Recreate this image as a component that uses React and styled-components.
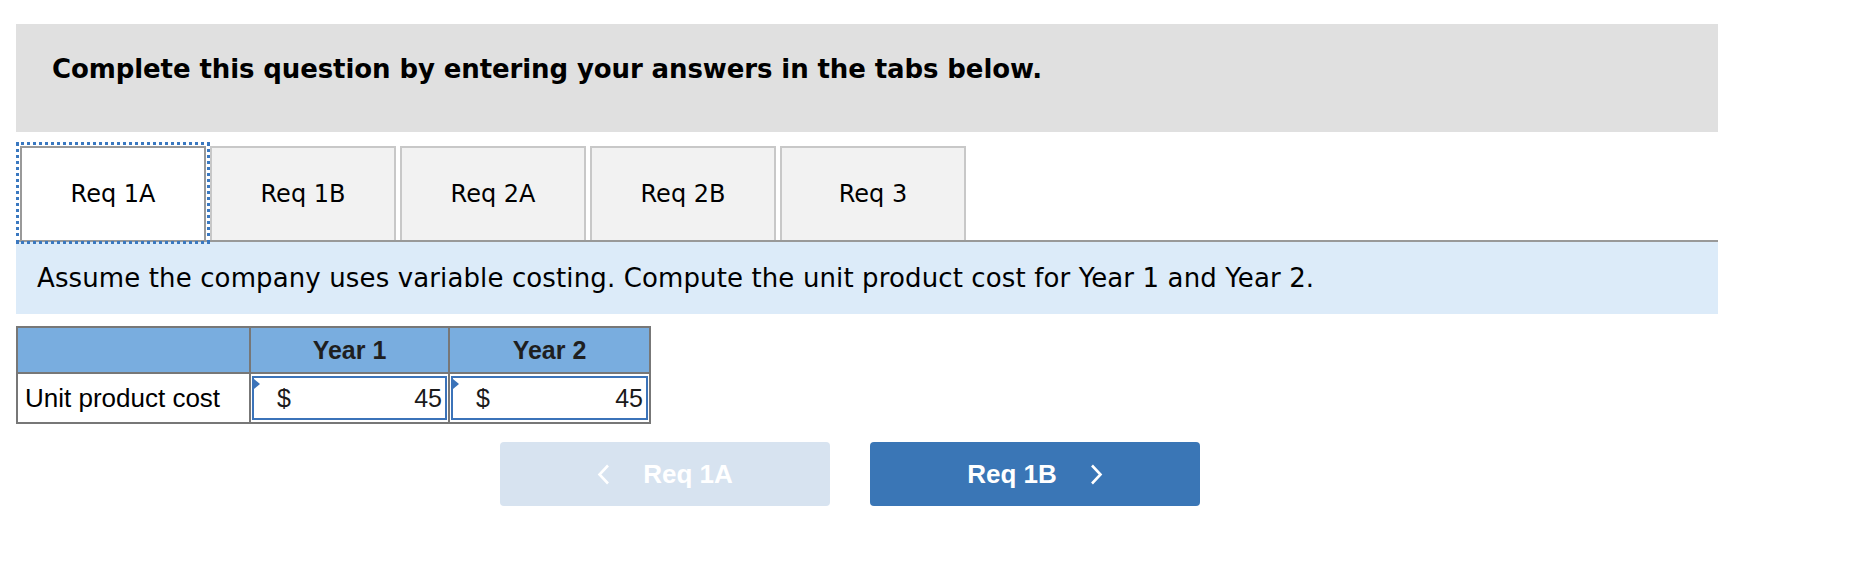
import React from "react";
import styled, {createGlobalStyle} from "styled-components";

const GlobalStyle = createGlobalStyle`
    html, body {
        margin: 0;
        padding: 0;
        background: #FFFFFF;
    }
`;

const PageContainer = styled.div`
    padding: 24px 0 0 16px;
    width: 1702px;
`;

const QuestionHeader = styled.section`
    height: 108px;
    box-sizing: border-box;
    background: #E0E0E0;
    padding: 29px 0 0 36px;
`;

const HeaderTitle = styled.h2`
    margin: 0;
    font-family: "DejaVu Sans", Verdana, sans-serif;
    font-weight: bold;
    font-size: 26px;
    line-height: 32px;
    letter-spacing: -0.1px;
    color: #000000;
`;

const TabBar = styled.div`
    display: flex;
    gap: 4px;
    margin-top: 14px;
    padding-left: 4px;
    border-bottom: 2px solid #999999;
`;

const Tab = styled.button`
    width: 186px;
    height: 94px;
    box-sizing: border-box;
    border: 2px solid ${props => props.active ? "#999999" : "#C8C8C8"};
    border-bottom: none;
    background: ${props => props.active ? "#FFFFFF" : "#F2F2F2"};
    outline: ${props => props.active ? "3px dotted #3A78C0" : "none"};
    outline-offset: 1px;
    font-family: "DejaVu Sans", Verdana, sans-serif;
    font-size: 24px;
    color: #000000;
    padding: 0;
    cursor: pointer;
`;

const Instructions = styled.div`
    height: 72px;
    display: flex;
    align-items: center;
    background: #DCEBF9;
    padding-left: 21px;
    font-family: "DejaVu Sans", Verdana, sans-serif;
    font-size: 26px;
    letter-spacing: 0.12px;
    color: #000000;
`;

const AnswerTable = styled.table`
    margin-top: 12px;
    border-collapse: collapse;
    font-family: "Liberation Sans", Arial, sans-serif;
    font-size: 25px;
    color: #1A1A1A;

    th, td {
        border: 2px solid #777777;
    }
`;

const HeadCell = styled.th`
    width: ${props => props.w}px;
    height: 44px;
    padding: 0;
    background: #79ADDF;
    font-weight: bold;
    text-align: center;
    color: #1F1F1F;
`;

const LabelCell = styled.td`
    height: 46px;
    padding: 0 0 0 7px;
    background: #FFFFFF;
    text-align: left;
    font-size: 26px;
    color: #000000;
`;

const InputCell = styled.td`
    height: 46px;
    padding: 1px;
    background: #FFFFFF;
`;

const InputBox = styled.div`
    position: relative;
    height: 44px;
    box-sizing: border-box;
    border: 2px solid #3B73B9;
    display: flex;
    align-items: center;
    justify-content: space-between;
    padding: 0 3px 0 23px;
    color: #1A1A1A;
`;

const CornerMark = styled.span`
    position: absolute;
    top: 1px;
    left: 0;
    width: 0;
    height: 0;
    border-top: 5px solid transparent;
    border-bottom: 5px solid transparent;
    border-left: 6px solid #3B73B9;
`;

const NavRow = styled.div`
    display: flex;
    gap: 40px;
    margin-top: 18px;
    padding-left: 484px;
`;

const NavButton = styled.button`
    width: 330px;
    height: 64px;
    border: none;
    border-radius: 4px;
    background: ${props => props.disabled ? "#D7E3F0" : "#3A76B6"};
    color: #FFFFFF;
    display: flex;
    align-items: center;
    justify-content: center;
    gap: 33px;
    font-family: "Liberation Sans", Arial, sans-serif;
    font-weight: bold;
    font-size: 26px;
    padding: 0;
    cursor: ${props => props.disabled ? "default" : "pointer"};
`;

const Chevron = ({dir}) => (
    <svg width="13" height="21" viewBox="0 0 13 21">
        <polyline
            points={dir === "left" ? "11,1.5 2.5,10.5 11,19.5" : "2,1.5 10.5,10.5 2,19.5"}
            fill="none"
            stroke="#FFFFFF"
            strokeWidth="2.6"
        />
    </svg>
);

const tabs = ["Req 1A", "Req 1B", "Req 2A", "Req 2B", "Req 3"];

const App = () => {

    return (
        <PageContainer>
            <GlobalStyle/>
            <QuestionHeader>
                <HeaderTitle>Complete this question by entering your answers in the tabs below.</HeaderTitle>
            </QuestionHeader>
            <TabBar>
                {tabs.map((t, i) => (
                    <Tab key={t} active={i === 0}>{t}</Tab>
                ))}
            </TabBar>
            <Instructions>
                Assume the company uses variable costing. Compute the unit product cost for Year 1 and Year 2.
            </Instructions>
            <AnswerTable>
                <thead>
                    <tr>
                        <HeadCell w={231}></HeadCell>
                        <HeadCell w={197}>Year 1</HeadCell>
                        <HeadCell w={199}>Year 2</HeadCell>
                    </tr>
                </thead>
                <tbody>
                    <tr>
                        <LabelCell>Unit product cost</LabelCell>
                        <InputCell>
                            <InputBox>
                                <CornerMark/>
                                <span>$</span>
                                <span>45</span>
                            </InputBox>
                        </InputCell>
                        <InputCell>
                            <InputBox>
                                <CornerMark/>
                                <span>$</span>
                                <span>45</span>
                            </InputBox>
                        </InputCell>
                    </tr>
                </tbody>
            </AnswerTable>
            <NavRow>
                <NavButton disabled>
                    <Chevron dir="left"/>
                    <span>Req 1A</span>
                </NavButton>
                <NavButton>
                    <span>Req 1B</span>
                    <Chevron dir="right"/>
                </NavButton>
            </NavRow>
        </PageContainer>
    )
}

export default App;
